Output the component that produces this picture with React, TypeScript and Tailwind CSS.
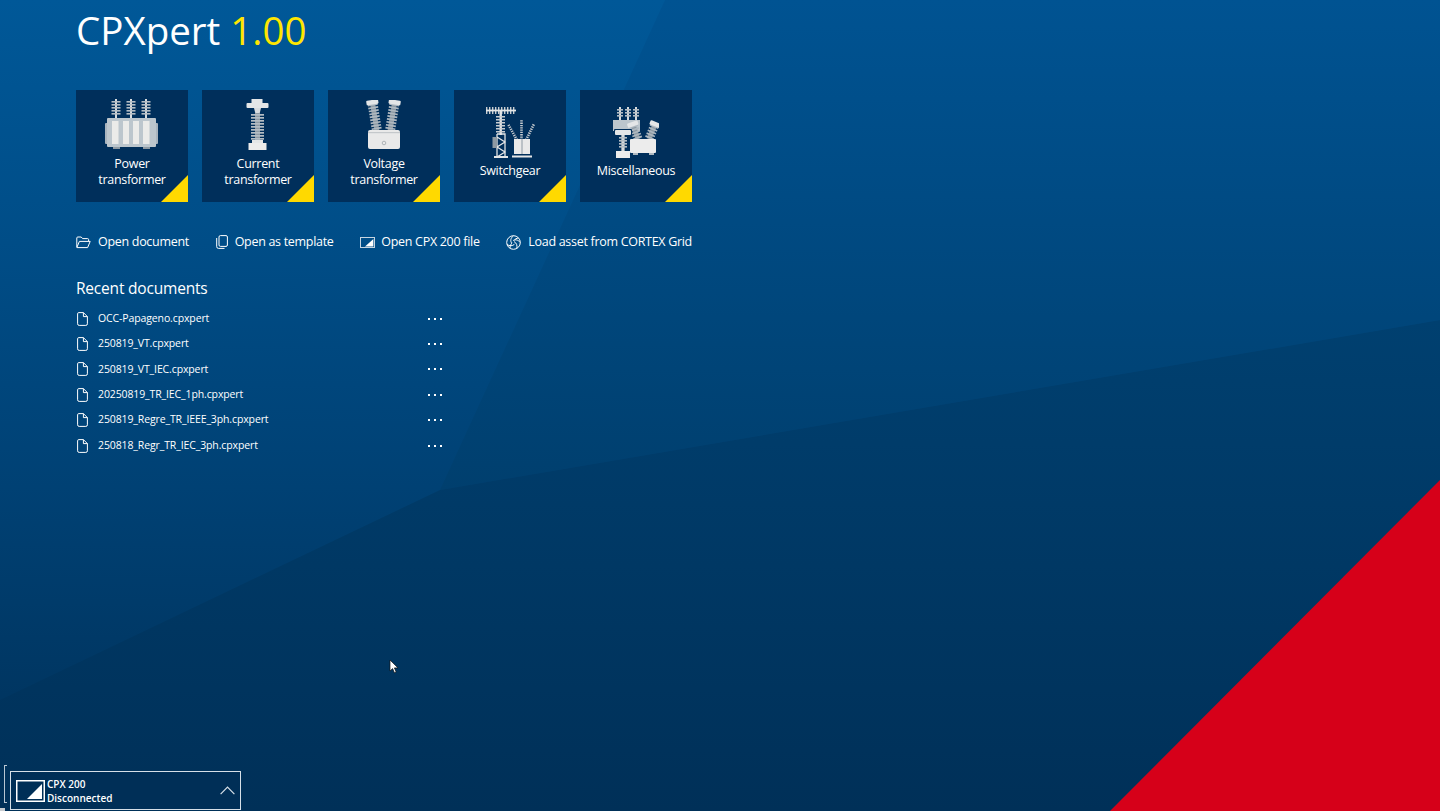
import type { ReactNode } from 'react';

const font = { fontFamily: '"Open Sans", "Noto Sans", sans-serif' };

function Background() {
  return (
    <svg className="absolute inset-0 h-full w-full" viewBox="0 0 1440 811" preserveAspectRatio="none">
      <defs>
        <linearGradient id="base" x1="0" y1="0" x2="0" y2="1">
          <stop offset="0" stopColor="#005898" />
          <stop offset="0.3" stopColor="#004d87" />
          <stop offset="0.6" stopColor="#004174" />
          <stop offset="1" stopColor="#003058" />
        </linearGradient>
        <linearGradient id="right" x1="0" y1="0" x2="0" y2="1">
          <stop offset="0" stopColor="#005392" />
          <stop offset="0.4" stopColor="#004b84" />
          <stop offset="1" stopColor="#003f6e" />
        </linearGradient>
        <linearGradient id="low" x1="0" y1="0" x2="0" y2="1">
          <stop offset="0" stopColor="#004070" />
          <stop offset="1" stopColor="#003058" />
        </linearGradient>
      </defs>
      <rect width="1440" height="811" fill="url(#base)" />
      <polygon points="665,0 1440,0 1440,320 440,490" fill="url(#right)" />
      <polygon points="0,700 440,490 1440,320 1440,811 0,811" fill="url(#low)" />
      <polygon points="1440,480 1440,811 1110,811" fill="#d60019" />
    </svg>
  );
}

function Corner() {
  return <div className="absolute bottom-0 right-0 h-[27px] w-[27px] bg-[#ffd900] [clip-path:polygon(100%_0,100%_100%,0_100%)]" />;
}

function Tile({ icon, lines }: { icon: ReactNode; lines: string[] }) {
  const single = lines.length === 1;
  return (
    <div className="relative flex h-[112px] w-[112px] flex-col items-center bg-[#002f5b] text-white">
      <div className={`flex items-end ${single ? 'h-[68px]' : 'h-[60px]'}`}>{icon}</div>
      <div className={`text-center text-[12.5px] leading-[16px] tracking-[-0.3px] ${single ? 'mt-[5px]' : 'mt-[6px]'}`}>
        {lines.map((l) => (
          <div key={l}>{l}</div>
        ))}
      </div>
      <Corner />
    </div>
  );
}

function Bushing({ x, y, h = 24, w = 9 }: { x: number; y: number; h?: number; w?: number }) {
  const ribs = [];
  for (let i = 2; i < h - 3; i += 3) ribs.push(<rect key={i} x={x - w / 2} y={y + i} width={w} height="1.6" fill="#b4bdc4" />);
  return (
    <g>
      <rect x={x - 1} y={y} width="2" height={h} fill="#d7dbde" />
      {ribs}
    </g>
  );
}

function Tilted({ x1, y1, x2, y2, capW = 12 }: { x1: number; y1: number; x2: number; y2: number; capW?: number }) {
  const len = Math.hypot(x2 - x1, y2 - y1);
  const angle = (Math.atan2(x1 - x2, y2 - y1) * 180) / Math.PI;
  const ribs = [];
  for (let y = 4; y < len - 1; y += 3) ribs.push(<rect key={y} x={-capW / 2 + 1} y={y} width={capW - 2} height="1.7" fill="#aeb8c0" />);
  return (
    <g transform={`translate(${x1} ${y1}) rotate(${angle})`}>
      <rect x="-2.5" y="2" width="5" height={len - 2} fill="#8e9aa3" />
      {ribs}
      <rect x={-capW / 2} y="0" width={capW} height="4.5" rx="1" fill="#e4e6e7" />
    </g>
  );
}

function PowerIcon() {
  return (
    <svg width="54" height="52" viewBox="0 0 54 52">
      <Bushing x={11} y={1} h={20} />
      <Bushing x={26} y={1} h={20} />
      <Bushing x={41} y={1} h={20} />
      <rect x="0" y="25" width="53" height="21" rx="1" fill="#a9b4be" />
      <rect x="2" y="20" width="49" height="29" rx="1" fill="#bcc6cd" />
      <rect x="7" y="23" width="6.5" height="23" fill="#ebebe9" />
      <rect x="18" y="23" width="6" height="23" fill="#ebebe9" />
      <rect x="28" y="23" width="6" height="23" fill="#ebebe9" />
      <rect x="38" y="23" width="6.5" height="23" fill="#ebebe9" />
      <rect x="8" y="49" width="7" height="2" fill="#8e9aa3" />
      <rect x="38" y="49" width="7" height="2" fill="#8e9aa3" />
    </svg>
  );
}

function CurrentIcon() {
  const ribs = [];
  for (let y = 15; y < 41; y += 3) ribs.push(<rect key={y} x="5" y={y} width="13" height="1.7" fill="#b4bdc4" />);
  return (
    <svg width="24" height="51" viewBox="0 0 24 51">
      <rect x="5.5" y="0" width="11" height="4" fill="#e4e6e7" />
      <rect x="0.5" y="4" width="22" height="5" rx="1" fill="#e4e6e7" />
      <polygon points="8,9 15,9 13.5,15 9.5,15" fill="#d7dbde" />
      <rect x="9" y="14" width="5" height="28" fill="#8e9aa3" />
      {ribs}
      <rect x="6" y="41" width="11" height="3" fill="#e4e6e7" />
      <rect x="2.5" y="44" width="18" height="7" fill="#ececec" />
    </svg>
  );
}

function VoltageIcon() {
  return (
    <svg width="36" height="50" viewBox="0 0 36 50">
      <Tilted x1={6} y1={0} x2={11} y2={31} />
      <Tilted x1={29} y1={0} x2={24} y2={31} />
      <rect x="2" y="30" width="32" height="19" rx="2" fill="#e9e9e9" />
      <rect x="2" y="32" width="32" height="1.2" fill="#c4c8cb" />
      <circle cx="18" cy="43" r="1.8" fill="none" stroke="#aeb4b8" />
    </svg>
  );
}

function SwitchgearIcon() {
  const ticks = [];
  for (let x = 1; x < 31; x += 3) ticks.push(<rect key={x} x={x} y="0" width="1.4" height="7" fill="#c8cdd1" />);
  const col = [];
  for (let y = 9; y < 27; y += 3) col.push(<rect key={y} x="11" y={y} width="9" height="1.5" fill="#c8cdd1" />);
  return (
    <svg width="50" height="51" viewBox="0 0 50 51">
      {ticks}
      <rect x="1" y="2.6" width="30" height="1.8" fill="#e4e6e7" />
      <rect x="14.5" y="4" width="2.4" height="24" fill="#e4e6e7" />
      {col}
      <path d="M12 27h8v23M12 27v23M12 30l8 5-8 5 8 5-8 5" stroke="#e4e6e7" strokeWidth="1.3" fill="none" />
      <rect x="7.5" y="30" width="4.5" height="11" fill="#8e9aa3" />
      <rect x="9" y="49" width="14" height="2" fill="#e4e6e7" />
      <path d="M32 33 23 17M36.5 33V13M41 33 49 17" stroke="#c8cdd1" strokeWidth="2.6" strokeDasharray="1.3 1" fill="none" />
      <rect x="29" y="32" width="16" height="15" fill="#e9e9e9" />
      <rect x="36.5" y="32" width="1" height="15" fill="#8e9aa3" />
      <rect x="27" y="48.5" width="20" height="2" fill="#e4e6e7" />
    </svg>
  );
}

function MiscIcon() {
  return (
    <svg width="46" height="51" viewBox="0 0 46 51">
      <Bushing x={7} y={0} h={14} w={6} />
      <Bushing x={15} y={0} h={14} w={6} />
      <Bushing x={23} y={0} h={14} w={6} />
      <rect x="0" y="13" width="27" height="11" fill="#bcc6cd" />
      <Tilted x1={19} y1={15} x2={25} y2={32} capW={11} />
      <Tilted x1={43} y1={15} x2={36} y2={32} capW={11} />
      <rect x="17" y="32" width="26" height="14" rx="1" fill="#ececec" />
      <rect x="20" y="46" width="5" height="2" fill="#aeb8c0" />
      <rect x="36" y="46" width="5" height="2" fill="#aeb8c0" />
      <rect x="1" y="22" width="18" height="6.5" rx="1" fill="#002f5b" />
      <rect x="2" y="23" width="16" height="5" rx="1" fill="#e4e6e7" />
      <rect x="8" y="28" width="4" height="16" fill="#8e9aa3" />
      <Bushing x={10} y={28} h={17} w={8} />
      <rect x="3" y="44" width="14" height="7" fill="#ececec" />
    </svg>
  );
}

function FolderIcon() {
  return (
    <svg width="15" height="13" viewBox="0 0 15 13" fill="none" stroke="#fff" strokeWidth="1" strokeLinejoin="round">
      <path d="M.8 11V2q0-1 1-1h3.4l1.4 1.6h5q1 0 1 1V5" />
      <path d="M.8 11.6 3.4 5.4h10.8l-2.6 6.2z" />
    </svg>
  );
}

function CopyIcon() {
  return (
    <svg width="12" height="14" viewBox="0 0 12 14" fill="none" stroke="#fff" strokeWidth="1">
      <rect x="3" y=".6" width="8.4" height="10.8" rx="1.4" />
      <path d="M.7 3v8.6q0 1.8 1.8 1.8h6" />
    </svg>
  );
}

function DeviceIcon({ big }: { big?: boolean }) {
  return big ? (
    <svg width="29" height="22" viewBox="0 0 29 22">
      <rect x=".75" y=".75" width="27.5" height="20.5" fill="none" stroke="#fff" strokeWidth="1.5" />
      <polygon points="11,19 26,19 26,4" fill="#fff" />
    </svg>
  ) : (
    <svg width="15" height="11" viewBox="0 0 15 11">
      <rect x=".5" y=".5" width="14" height="10" fill="none" stroke="#c6d4e0" />
      <polygon points="5,9.4 13.4,9.4 13.4,2" fill="#fff" />
    </svg>
  );
}

function SpiralIcon() {
  return (
    <svg width="15" height="15" viewBox="0 0 15 15" fill="none" stroke="#fff" strokeWidth="1">
      <circle cx="7.5" cy="7.5" r="6.8" />
      <path d="M7.5 .8C4.5 3 4.2 6 5.6 8M14.2 7.5c-2-2.8-5-3.2-7-2M10.8 13.4C11.5 10.5 10.5 7.8 8 6.6M1 9.5c2.6 1.8 5.5 1.6 7.4-.2M4 13c.2-2.5 1-4 2-5.2M12.5 3c-2 .2-3.4 1-4.4 2.4" />
    </svg>
  );
}

function FileIcon() {
  return (
    <svg width="11" height="14" viewBox="0 0 11 14" fill="none" stroke="#fff" strokeWidth="1" strokeLinejoin="round">
      <path d="M1.8.6h4.6l4 4v7.2q0 1.6-1.6 1.6H2.2q-1.6 0-1.6-1.6V1.8q0-1.2 1.2-1.2z" />
      <path d="M6.4.6v4h4" />
    </svg>
  );
}

function Action({ icon, label, iconWidth }: { icon: ReactNode; label: string; iconWidth: string }) {
  return (
    <div className="flex items-center text-[12.5px] tracking-[-0.3px] text-white">
      <span className={`flex items-center ${iconWidth}`}>{icon}</span>
      <span>{label}</span>
    </div>
  );
}

const recent = [
  'OCC-Papageno.cpxpert',
  '250819_VT.cpxpert',
  '250819_VT_IEC.cpxpert',
  '20250819_TR_IEC_1ph.cpxpert',
  '250819_Regre_TR_IEEE_3ph.cpxpert',
  '250818_Regr_TR_IEC_3ph.cpxpert',
];

export default function App() {
  return (
    <div className="relative h-[811px] w-[1440px] overflow-hidden" style={font}>
      <Background />
      <div className="relative flex w-[692px] flex-col pl-[76px]">
        <h1 className="mt-[5px] h-[51px] text-[38.5px] font-medium leading-[51px] text-white">
          CPXpert <span className="text-[#ffe600]">1.00</span>
        </h1>
        <div className="mt-[34px] flex gap-[14px]">
          <Tile icon={<PowerIcon />} lines={['Power', 'transformer']} />
          <Tile icon={<CurrentIcon />} lines={['Current', 'transformer']} />
          <Tile icon={<VoltageIcon />} lines={['Voltage', 'transformer']} />
          <Tile icon={<SwitchgearIcon />} lines={['Switchgear']} />
          <Tile icon={<MiscIcon />} lines={['Miscellaneous']} />
        </div>
        <div className="mt-[31px] flex h-[18px] items-center justify-between">
          <Action icon={<FolderIcon />} label="Open document" iconWidth="w-[22px]" />
          <Action icon={<CopyIcon />} label="Open as template" iconWidth="w-[19px]" />
          <Action icon={<DeviceIcon />} label="Open CPX 200 file" iconWidth="w-[21px]" />
          <Action icon={<SpiralIcon />} label="Load asset from CORTEX Grid" iconWidth="w-[22px]" />
        </div>
        <h2 className="mt-[26px] text-[15.5px] font-normal leading-[22px] tracking-[-0.2px] text-white">Recent documents</h2>
        <div className="mt-[7px] flex w-[366px] flex-col">
          {recent.map((name) => (
            <div key={name} className="flex h-[25.4px] items-center text-[10.5px] tracking-[-0.12px] text-white">
              <span className="flex w-[22px] items-center pl-[1px]">
                <FileIcon />
              </span>
              <span className="flex-1">{name}</span>
              <span className="flex gap-[4px]">
                <i className="h-[2px] w-[2px] bg-white" />
                <i className="h-[2px] w-[2px] bg-white" />
                <i className="h-[2px] w-[2px] bg-white" />
              </span>
            </div>
          ))}
        </div>
      </div>

      <svg className="absolute left-[389px] top-[659px]" width="10" height="15" viewBox="0 0 10 15">
        <path d="M1 1v11l2.6-2.4 1.8 4.2 1.8-.8-1.8-4.1H9z" fill="#fff" stroke="#111" strokeWidth=".7" />
      </svg>

      <div className="absolute left-[4px] top-[765px] h-[38px] w-[3px] border-y border-l border-[#b8c6d2]" />
      <div className="absolute bottom-0 left-0 h-[3px] w-[5px] bg-[#c8ccd0]" />
      <div className="absolute left-[10px] top-[771px] flex h-[39px] w-[231px] items-center border border-[#d6e0e8] bg-[#002f57] pl-[5px] text-white">
        <DeviceIcon big />
        <div className="ml-[2px] flex-1 text-[10px] font-semibold leading-[14px]">
          <div>CPX 200</div>
          <div>Disconnected</div>
        </div>
        <svg className="mr-[5px]" width="15" height="9" viewBox="0 0 15 9" fill="none" stroke="#d6e0e8" strokeWidth="1.2">
          <path d="M.6 8.2 7.5 1.2l6.9 7" />
        </svg>
      </div>
    </div>
  );
}
